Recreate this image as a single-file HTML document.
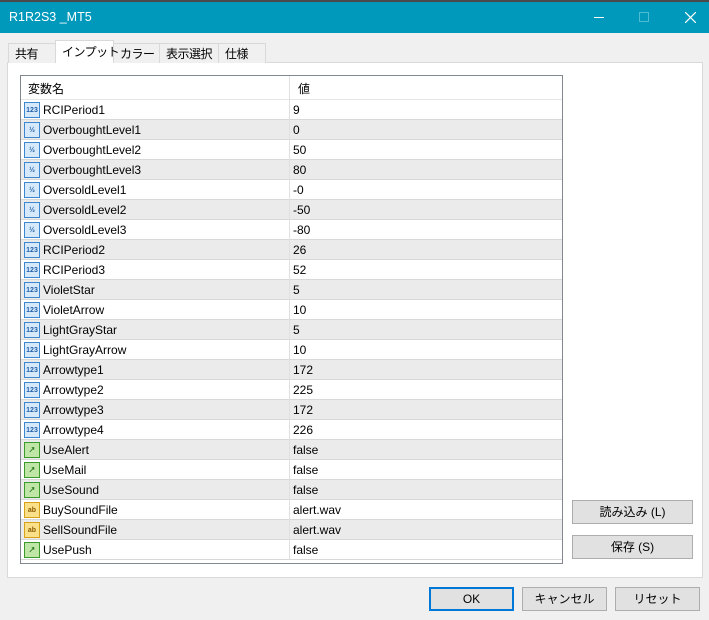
<!DOCTYPE html>
<html><head><meta charset="utf-8"><style>
*{box-sizing:border-box;margin:0;padding:0}
body{width:709px;height:620px;background:#f0f0f0;font-family:"Liberation Sans","Noto Sans CJK JP",sans-serif;font-size:12px;color:#000;position:relative;overflow:hidden}
.tb{position:absolute;left:0;top:0;width:709px;height:33px;background:#0099bc;border-top:2px solid #4a4a4a}
.tb .t{position:absolute;left:9px;top:8px;color:#fff;font-size:12.5px}
.tab{position:absolute;top:43px;height:20px;border:1px solid #d9d9d9;border-bottom:none;background:#f0f0f0;padding:1px 0 0 6px;font-size:12px;white-space:nowrap;letter-spacing:-0.5px}
.panel{position:absolute;left:7px;top:62px;width:696px;height:516px;background:#fff;border:1px solid #d9d9d9}
.tbl{position:absolute;left:20px;top:75px;width:543px;height:489px;border:1px solid #828790;background:#fff;overflow:hidden}
.row{position:absolute;left:0;width:541px;height:20px;border-bottom:1px solid #d8d8d8}
.row.g{background:#ebebeb}
.row .n{position:absolute;left:22px;top:3px}
.row .v{position:absolute;left:272px;top:3px}
.row .d{position:absolute;left:268px;top:0;width:1px;height:20px;background:#e0e0e0}
.ic{position:absolute;left:3px;top:2px;width:16px;height:16px;font-size:7px;font-weight:bold;text-align:center;line-height:15px}
.i1{background:#d6e9fb;border:1px solid #3d86d0;color:#1f5fa8}
.i2{background:#bfe6a6;border:1px solid #3a9a2a;color:#1a6a10}
.i3{background:#fbe08a;border:1px solid #d6a21a;color:#8a5a00}
.btn{position:absolute;height:24px;background:#e1e1e1;border:1px solid #adadad;text-align:center;line-height:22px;font-size:12px}
</style></head><body>
<div class="tb"><div class="t">R1R2S3 _MT5</div>
<div style="position:absolute;left:594px;top:15px;width:10px;height:1px;background:#fff"></div>
<div style="position:absolute;left:639px;top:10px;width:10px;height:10px;border:1px solid #4fbcd6"></div>
<svg style="position:absolute;left:685px;top:10px" width="11" height="11"><path d="M0 0L11 11M11 0L0 11" stroke="#fff" stroke-width="1.2"/></svg>
</div>
<div class="panel"></div>
<div class="tab" style="left:8px;width:48px">共有</div>
<div class="tab" style="left:55px;width:59px;top:40px;height:23px;background:#fff;z-index:2;padding-top:2px">インプット</div>
<div class="tab" style="left:113px;width:47px">カラー</div>
<div class="tab" style="left:159px;width:60px">表示選択</div>
<div class="tab" style="left:218px;width:48px">仕様</div>
<div class="tbl">
<div class="row" style="top:0;height:24px;border-bottom:1px solid #e5e5e5"><span class="n" style="left:7px;top:4px">変数名</span><span class="d" style="height:24px"></span><span class="v" style="left:277px;top:4px">値</span></div>
<div id="rows"></div>
</div>
<div class="btn" style="left:572px;top:500px;width:121px">読み込み (L)</div>
<div class="btn" style="left:572px;top:535px;width:121px">保存 (S)</div>
<div class="btn" style="left:429px;top:587px;width:85px;border:2px solid #0078d7;line-height:20px">OK</div>
<div class="btn" style="left:522px;top:587px;width:85px">キャンセル</div>
<div class="btn" style="left:615px;top:587px;width:85px">リセット</div>
<script>
var d=[["RCIPeriod1","9",1],["OverboughtLevel1","0",0],["OverboughtLevel2","50",0],["OverboughtLevel3","80",0],["OversoldLevel1","-0",0],["OversoldLevel2","-50",0],["OversoldLevel3","-80",0],["RCIPeriod2","26",1],["RCIPeriod3","52",1],["VioletStar","5",1],["VioletArrow","10",1],["LightGrayStar","5",1],["LightGrayArrow","10",1],["Arrowtype1","172",1],["Arrowtype2","225",1],["Arrowtype3","172",1],["Arrowtype4","226",1],["UseAlert","false",2],["UseMail","false",2],["UseSound","false",2],["BuySoundFile","alert.wav",3],["SellSoundFile","alert.wav",3],["UsePush","false",2]];
var h="";d.forEach(function(r,i){var c=r[2]==3?"i3":r[2]==2?"i2":"i1";var t=r[2]==0?"½":r[2]==1?"123":r[2]==2?"↗":"ab";
h+='<div class="row'+(i%2?' g':'')+'" style="top:'+(24+i*20)+'px"><span class="ic '+c+'">'+t+'</span><span class="n">'+r[0]+'</span><span class="d"></span><span class="v">'+r[1]+'</span></div>';});
document.getElementById("rows").innerHTML=h;
</script>
</body></html>
